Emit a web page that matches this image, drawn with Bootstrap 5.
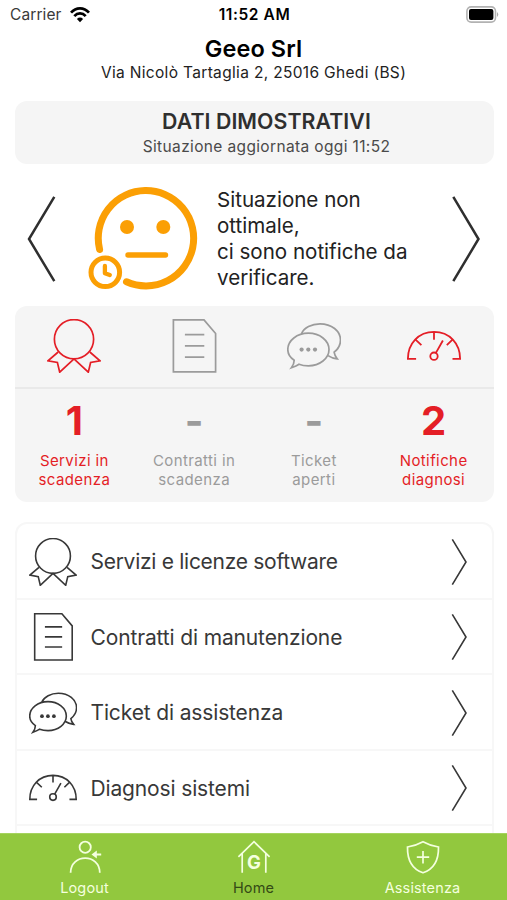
<!DOCTYPE html>
<html lang="it">
<head>
<meta charset="utf-8">
<meta name="viewport" content="width=device-width, initial-scale=1">
<title>Geeo Srl</title>
<link href="https://cdn.jsdelivr.net/npm/bootstrap@5.3.0/dist/css/bootstrap.min.css" rel="stylesheet">
<style>
body{font-family:Inter,"Liberation Sans",sans-serif;color:#2f2f2f;background:#fff}
svg{fill:none;stroke:currentColor;display:block;flex:none}
.screen{height:900px;overflow:hidden}
.statusbar{height:30px;padding:0 8px 0 10px;color:#000}
.statusbar>div{flex:1 1 0}
.carrier{font-size:15.5px;color:#3a3a3a;letter-spacing:.1px}
.clock{font-size:15.5px;font-weight:600;letter-spacing:.6px}
.company{height:71px;padding-top:4px;color:#000}
.company h1{font-size:23.5px;line-height:29px;font-weight:600;letter-spacing:.1px}
.company p{font-size:15.5px;line-height:19px;color:#222;letter-spacing:.33px}
.panel{background:#f5f5f5;border-radius:12px;margin:0 13.5px 0 14.5px}
.banner{height:63px;padding:5px 0 0 25px}
.banner h2{font-size:21.3px;line-height:30px;font-weight:600;letter-spacing:.07px}
.banner p{font-size:15.5px;line-height:22px;color:#4a4a4a;letter-spacing:.36px}
.situation{height:142px;padding:8px 26px 0}
.message{font-size:20.6px;line-height:25.8px;width:209px;margin-left:17px;color:#222;letter-spacing:-.02px}
.stats{height:197px}
.icons-row{height:83px;border-bottom:2px solid #e9e9e9}
.figure-value{font-size:40px;line-height:44px;font-weight:700;padding-top:10px}
.caption-text{font-size:15px;line-height:19.5px;margin-top:8px;letter-spacing:.4px}
.alerted{color:#e41e26}
.idle{color:#9b9b9b}
.menu{margin:20px 13.5px 0 14.5px;height:311px;border:2px solid #f7f7f7;border-bottom:0;border-radius:12px 12px 0 0}
.menu-row{height:75.5px;border-bottom:2px solid #f7f7f7;padding:1.5px 25px 0 12px;font-size:21px;color:#383838;letter-spacing:-.14px}
.menu-row:first-child{letter-spacing:-.28px}
.menu-row span{margin-left:14px}
.tabs{height:67px;background:#92c83e;color:#f4ffdf;font-size:14.5px;border-top:1px solid #a5d35e}
.tabs a{color:inherit;padding-top:5px}
.tabs a.current span{color:#344a16}
.tabs span{line-height:18px;letter-spacing:.15px;margin-top:4px}
.tabs text{font:700 18.5px Inter,sans-serif;fill:currentColor;stroke:none}
</style>
<script src="https://cdn.jsdelivr.net/npm/bootstrap@5.3.0/dist/js/bootstrap.bundle.min.js"></script>
</head>
<body>
<svg width="0" height="0" class="position-absolute" aria-hidden="true">
<symbol id="ribbon" viewBox="0 0 54 54"><circle cx="27" cy="20.2" r="19.6"/><path d="M11.2 33 1 41.8l9.4 1.7 2.3 9.7L27 39.8l14.3 13.4 2.3-9.7 9.4-1.7L42.8 33"/></symbol>
<symbol id="doc" viewBox="0 0 54 54"><path d="M6.4.9H37L48.600 14.500V52.800H6.400ZM17.900 15.600H37.300M17.900 26.900H37.300M17.900 38.200H37.300"/></symbol>
<symbol id="chat" viewBox="0 0 54 54"><path d="M7.200 41.200C3 38.500.8 34.700.8 30.500.8 21.500 10 14.200 21.400 14.200S42 21.500 42 30.500 32.800 46.800 21.400 46.800C18 46.800 14.800 46.300 12 45.200 9.800 46.800 7 47.800 4.400 48.700 6 46.500 7.200 44 7.200 41.200ZM14.400 14.800C17 8.800 24.500 4.800 33 4.800 44.500 4.800 53.500 12 53.500 21 53.500 26 51 30.200 47.100 33.200 47.500 35.800 48.500 37.800 50.200 39.800 47 39.500 43.800 38.500 41 36.600"/><g fill="currentColor" stroke="none"><circle cx="14.600" cy="30.600" r="2.100"/><circle cx="21.300" cy="30.600" r="2.100"/><circle cx="28" cy="30.600" r="2.100"/></g></symbol>
<symbol id="gauge" viewBox="0 0 54 54"><path d="M9.100 39.800H.9C.9 24.500 11.500 12.800 27 12.800S53.100 24.500 53.100 39.800H45.500M27 12.800V20.800M8.800 20.900 14.400 26.200M45.200 20.900 39.800 26.200M35.900 21.500 28.900 33.900"/><circle cx="27" cy="37.200" r="3.700"/></symbol>
<symbol id="next" viewBox="0 0 16 48"><path d="M1.300 1.300 15 24 1.300 46.700"/></symbol>
</svg>
<div class="screen d-flex flex-column">
<header class="statusbar d-flex align-items-center">
<div class="d-flex align-items-center carrier">Carrier<svg class="ms-2" width="20" height="16" viewBox="0 0 20 16" style="color:#000"><g stroke-width="2.700"><path d="M1 5.700C6-.1 14-.1 19 5.700M4.300 9.100C7.500 5.500 12.500 5.500 15.700 9.100"/></g><path d="M10 15.200 6.900 11.900Q10 9.100 13.100 11.900Z" fill="currentColor" stroke="none"/></svg></div>
<div class="text-center clock text-nowrap">11:52 AM</div>
<div class="d-flex justify-content-end"><svg width="33" height="17" viewBox="0 0 33 17"><rect x=".9" y=".9" width="28.600" height="15.200" rx="4.300" stroke="#b2b2b2" stroke-width="1.600"/><rect x="3" y="3" width="24.400" height="11" rx="2" fill="#000" stroke="none"/><path d="M31 6Q33.500 8.500 31 11Z" fill="#aaa" stroke="none"/></svg></div>
</header>
<section class="company text-center"><h1 class="m-0">Geeo Srl</h1><p class="m-0">Via Nicolò Tartaglia 2, 25016 Ghedi (BS)</p></section>
<section class="panel banner text-center"><h2 class="m-0">DATI DIMOSTRATIVI</h2><p class="m-0">Situazione aggiornata oggi 11:52</p></section>
<section class="situation d-flex align-items-center">
<svg width="31" height="88" viewBox="26 194.500 31 88" stroke-width="2.500"><path d="M54.300 196.300 29 238.500 54.300 280.700"/></svg>
<svg class="ms-4" width="119" height="108" viewBox="81 185 119 108" style="color:#fb9f04"><path d="M99.600 249.500A47.700 47.700 0 1 1 126.500 281.800" stroke-width="7" stroke-linecap="round"/><g fill="currentColor" stroke="none"><circle cx="127" cy="227" r="7"/><circle cx="163.300" cy="227" r="7"/></g><path d="M128 255H165.500" stroke-width="5.400" stroke-linecap="round"/><circle cx="105.300" cy="272.300" r="19" fill="#fff" stroke="none"/><circle cx="105.300" cy="272.300" r="14.300" stroke-width="5"/><path d="M104.900 266V273.200L109.800 275" stroke-width="4.300" stroke-linecap="round" stroke-linejoin="round"/></svg>
<div class="message">Situazione non<br>ottimale,<br>ci sono notifiche da<br>verificare.</div>
<svg class="ms-auto" width="30" height="88" viewBox="452 194.500 30 88" stroke-width="2.500"><path d="M454.300 196.300 479.500 238.500 454.300 280.700"/></svg>
</section>
<section class="panel stats text-center">
<div class="row g-0 icons-row align-items-center">
<div class="col-3 d-flex justify-content-center alerted"><svg width="54" height="54" stroke-width="1.700"><use href="#ribbon"/></svg></div>
<div class="col-3 d-flex justify-content-center idle"><svg width="54" height="54" stroke-width="1.700"><use href="#doc"/></svg></div>
<div class="col-3 d-flex justify-content-center idle"><svg width="54" height="54" stroke-width="1.700"><use href="#chat"/></svg></div>
<div class="col-3 d-flex justify-content-center alerted"><svg width="54" height="54" stroke-width="1.800"><use href="#gauge"/></svg></div>
</div>
<div class="row g-0">
<div class="col-3 alerted"><div class="figure-value">1</div><div class="caption-text">Servizi in<br>scadenza</div></div>
<div class="col-3 idle"><div class="figure-value">-</div><div class="caption-text">Contratti in<br>scadenza</div></div>
<div class="col-3 idle"><div class="figure-value">-</div><div class="caption-text">Ticket<br>aperti</div></div>
<div class="col-3 alerted"><div class="figure-value">2</div><div class="caption-text">Notifiche<br>diagnosi</div></div>
</div>
</section>
<section class="menu overflow-hidden">
<div class="menu-row d-flex align-items-center"><svg width="48" height="48" stroke-width="1.800"><use href="#ribbon"/></svg><span>Servizi e licenze software</span><svg class="ms-auto" width="16" height="48" stroke-width="1.600"><use href="#next"/></svg></div>
<div class="menu-row d-flex align-items-center"><svg width="48" height="48" stroke-width="1.800"><use href="#doc"/></svg><span>Contratti di manutenzione</span><svg class="ms-auto" width="16" height="48" stroke-width="1.600"><use href="#next"/></svg></div>
<div class="menu-row d-flex align-items-center"><svg width="48" height="48" stroke-width="1.800"><use href="#chat"/></svg><span>Ticket di assistenza</span><svg class="ms-auto" width="16" height="48" stroke-width="1.600"><use href="#next"/></svg></div>
<div class="menu-row d-flex align-items-center"><svg width="48" height="48" stroke-width="1.800"><use href="#gauge"/></svg><span>Diagnosi sistemi</span><svg class="ms-auto" width="16" height="48" stroke-width="1.600"><use href="#next"/></svg></div>
</section>
<nav class="tabs row g-0 text-center">
<a href="#" class="col-4 d-flex flex-column align-items-center text-decoration-none"><svg width="36" height="36" viewBox="66.500 838.500 36 36" stroke-width="1.800"><circle cx="84.700" cy="846.700" r="5.600"/><path d="M70.100 872.300C70.100 852.800 99.300 852.800 99.300 872.300M100.700 854H93"/><path d="M91 854 96.300 850V858Z" fill="currentColor" stroke="none"/></svg><span>Logout</span></a>
<a href="#" class="col-4 d-flex flex-column align-items-center text-decoration-none current"><svg width="36" height="36" viewBox="236 838.500 36 36" stroke-width="1.700"><path d="M238.400 856.300 254 841.200 269.600 856.300M242.200 852.800V872.300M265.800 852.800V872.300"/><text x="254" y="868.800" text-anchor="middle">G</text></svg><span>Home</span></a>
<a href="#" class="col-4 d-flex flex-column align-items-center text-decoration-none"><svg width="36" height="36" viewBox="404.500 838.500 36 36" stroke-width="1.700"><path d="M422.500 841.300Q415 845.500 407 846.500C406.800 858 411 868.500 422.500 872.300 434 868.500 438.200 858 438 846.500Q430 845.500 422.500 841.300ZM422.500 850.500V863M416.300 856.700H428.700"/></svg><span>Assistenza</span></a>
</nav>
</div>
</body>
</html>
